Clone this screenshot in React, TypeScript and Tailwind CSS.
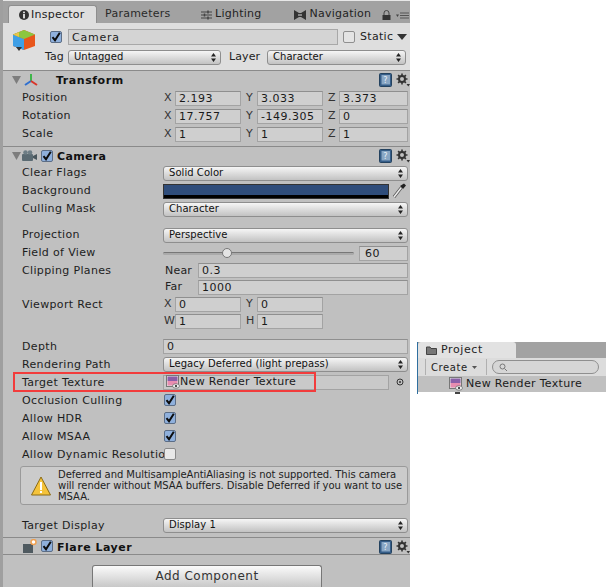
import type { ReactNode } from "react";

function Chevrons() {
  return (
    <svg width="5" height="9" viewBox="0 0 5 9" className="shrink-0">
      <path d="M2.5 0L5 3.5H0z M2.5 9L0 5.5h5z" fill="#222" />
    </svg>
  );
}

function Select({ value }: { value: string }) {
  return (
    <div className="flex h-[15px] flex-1 min-w-0 items-center justify-between rounded-[3px] border border-[#8e8e8e] bg-linear-to-b from-[#f6f6f6] to-[#c2c2c2] pl-[5px] pr-[4px] text-[10px] tracking-[0.05px] text-[#111]">
      <span className="-mt-[2px] whitespace-nowrap">{value}</span>
      <Chevrons />
    </div>
  );
}

function Field({ value, className = "flex-1" }: { value?: string; className?: string }) {
  return (
    <div className={`h-[15px] min-w-0 border border-[#a3a3a3] border-t-[#8f8f8f] bg-[#cfcfcf] pl-[3px] text-[11px] leading-[13px] tracking-[0.5px] text-[#1a1a1a] whitespace-nowrap ${className}`}>
      {value}
    </div>
  );
}

function Row({ label, children, low, className = "h-[18px]" }: { label: string; children?: ReactNode; low?: boolean; className?: string }) {
  return (
    <div className={`flex items-center pl-[19px] pr-[2px] ${className}`}>
      <span className={`w-[141px] shrink-0 text-[11px] tracking-[0.35px] text-[#1d1d1d] whitespace-nowrap ${low ? "pt-[2px]" : ""}`}>{label}</span>
      <div className="flex items-center flex-1 min-w-0">{children}</div>
    </div>
  );
}

function Cell({ axis, value, last }: { axis: string; value: string; last?: boolean }) {
  return (
    <div className={`flex items-center ${last ? "w-[81px]" : "w-[82px]"}`}>
      <span className="w-[12px] shrink-0 pl-[1px] text-[11px] text-[#333]">{axis}</span>
      <Field value={value} className={last ? "flex-1" : "flex-1 mr-[4px]"} />
    </div>
  );
}

function Vector({ label, x, y, z }: { label: string; x: string; y: string; z: string }) {
  return (
    <Row label={label}>
      <Cell axis="X" value={x} />
      <Cell axis="Y" value={y} />
      <Cell axis="Z" value={z} last />
    </Row>
  );
}

function Check({ on = true }: { on?: boolean }) {
  return (
    <div className={`relative size-[12px] shrink-0 rounded-[2px] border ${on ? "border-[#5b6d86] bg-[#8fb0dc]" : "border-[#8a8a8a] bg-[#e8e8e8]"}`}>
      {on && (
        <svg viewBox="0 0 12 12" className="absolute -left-px -top-px size-[12px]">
          <path d="M2.5 6.2L5 9.2L9.8 1.8" fill="none" stroke="#0d0d0d" strokeWidth="2" />
        </svg>
      )}
    </div>
  );
}

function HelpBook() {
  return (
    <svg width="13" height="14" viewBox="0 0 13 14">
      <rect x="0.5" y="0.5" width="12" height="13" rx="1" fill="#355d88" stroke="#24425f" />
      <rect x="2.5" y="2" width="8.5" height="9.5" fill="#88a6c4" />
      <text x="4.2" y="10" fontSize="8" fontFamily="'DejaVu Sans', sans-serif" fill="#e8f0f8">?</text>
    </svg>
  );
}

function Gear() {
  return (
    <svg width="14" height="14" viewBox="0 0 14 14">
      <circle cx="6" cy="6" r="3" fill="none" stroke="#333" strokeWidth="2" />
      <path d="M6 .5v2.4M6 9.1v2.4M.5 6h2.4M9.1 6h2.4M2.1 2.1l1.7 1.7M8.2 8.2l1.7 1.7M9.9 2.1L8.2 3.8M3.8 8.2L2.1 9.9" stroke="#333" strokeWidth="1.6" />
      <path d="M10.5 11h3.5l-1.7 2.5z" fill="#333" />
    </svg>
  );
}

function CompIcons() {
  return (
    <div className="ml-auto flex items-center gap-[4px]">
      <HelpBook />
      <Gear />
    </div>
  );
}

function Foldout() {
  return (
    <svg width="9" height="8" viewBox="0 0 9 8" className="shrink-0">
      <path d="M0 0h9L4.5 8z" fill="#7d7d7d" />
    </svg>
  );
}

function RenderTexIcon() {
  return (
    <svg width="14" height="14" viewBox="0 0 14 14" className="shrink-0">
      <rect x="0.5" y="0.5" width="12" height="11" fill="#e4e4e4" stroke="#777" />
      <rect x="1.5" y="1.5" width="10" height="4.5" fill="#8a5fa8" />
      <rect x="1.5" y="6" width="10" height="4.5" fill="#e88db0" />
      <ellipse cx="10" cy="11" rx="3.5" ry="2.2" fill="#f4f4f4" stroke="#444" strokeWidth="0.6" />
      <circle cx="10" cy="11" r="1.1" fill="#222" />
    </svg>
  );
}

export default function App() {
  return (
    <div className="flex h-[587px] w-[609px] overflow-hidden bg-white font-['DejaVu_Sans',sans-serif]">
      {/* Inspector */}
      <div className="flex h-full w-[410px] shrink-0 flex-col border-l-[3px] border-[#9f9f9f] bg-[#c0c0c0]">
        {/* Tabs */}
        <div className="flex h-[23px] shrink-0 items-end border-t border-[#e8e8e8] bg-[#a2a2a2] text-[11px] tracking-[0.25px] text-[#222]">
          <div className="ml-[5px] flex h-[18px] w-[89px] items-center gap-[2px] rounded-t-[3px] border border-b-0 border-[#8e8e8e] bg-[#dedede] pl-[10px] pt-[1px]">
            <svg width="10" height="10" viewBox="0 0 10 10">
              <circle cx="5" cy="5" r="5" fill="#333" />
              <rect x="4.2" y="1.6" width="1.6" height="1.6" fill="#fff" />
              <rect x="4.2" y="4" width="1.6" height="4.4" fill="#fff" />
            </svg>
            <span>Inspector</span>
          </div>
          <div className="flex h-[18px] w-[73px] items-center pl-[8px] pt-[1px] text-[#2a2a2a]">Parameters</div>
          <div className="ml-[31px] flex h-[18px] items-center gap-[3px] pt-[1px]">
            <svg width="11" height="10" viewBox="0 0 11 10">
              <path d="M0 2h11M0 5h11M0 8h11" stroke="#444" />
              <path d="M7 .5v3M3.5 3.5v3M7 6.5v3" stroke="#444" strokeWidth="1.5" />
            </svg>
            <span>Lighting</span>
          </div>
          <div className="ml-[33px] flex h-[18px] items-center gap-[3px] pt-[1px]">
            <svg width="12" height="10" viewBox="0 0 12 10">
              <path d="M0 0l5 3 2 0 5-3v10l-5-3H5l-5 3z" fill="#333" />
              <path d="M4 5h4" stroke="#ddd" />
            </svg>
            <span>Navigation</span>
          </div>
          <div className="ml-auto flex h-[18px] items-center gap-[5px] pr-[1px] pt-[2px]">
            <svg width="9" height="10" viewBox="0 0 9 10">
              <path d="M2 5V3a2.5 2.5 0 0 1 5 0v2" fill="none" stroke="#444" />
              <rect x="0.5" y="5" width="8" height="5" fill="#333" />
            </svg>
            <svg width="13" height="7" viewBox="0 0 13 7">
              <path d="M0 2.5h3L1.5 5z" fill="#444" />
              <path d="M4 1h9M4 3.5h9M4 6h9" stroke="#555" />
            </svg>
          </div>
        </div>

        {/* Object header */}
        <div className="flex h-[48px] shrink-0 border-b border-[#8a8a8a] bg-[#dedede]">
          <div className="w-[43px] shrink-0 pl-[10px] pt-[6px]">
            <svg width="22" height="24" viewBox="1 0 22 24">
              <path d="M12 1L23 5.5V17L12 21L1 17V5.5z" fill="#e8561c" />
              <path d="M1 5.5L12 10V21L1 17z" fill="#3f9fe6" />
              <path d="M12 1L23 5.5L12 10L1 5.5z" fill="#8cc63f" />
              <path d="M1 5.5L7 8V3.3z" fill="#e9c54a" />
              <path d="M4 18h6l-3 4z" fill="#333" />
            </svg>
          </div>
          <div className="flex flex-1 flex-col">
            <div className="mt-[6px] flex h-[16px] items-center">
              <div className="ml-[4px]"><Check /></div>
              <div className="ml-[6px] h-[16px] w-[270px] border border-[#a8a8a8] bg-[#d4d4d4] pl-[3px] text-[11px] leading-[15px] tracking-[0.75px] text-[#1d1d1d]">Camera</div>
              <div className="ml-[5px] size-[12px] rounded-[2px] border border-[#8f8f8f] bg-[#e4e4e4]" />
              <span className="ml-[5px] text-[11px] tracking-[0.3px] text-[#222]">Static</span>
              <svg width="10" height="6" viewBox="0 0 10 6" className="ml-[4px]">
                <path d="M0 0h10L5 6z" fill="#333" />
              </svg>
            </div>
            <div className="mt-[4px] flex h-[16px] items-center pr-[4px]">
              <span className="-ml-[1px] w-[23px] text-[11px] tracking-[0.1px] text-[#222]">Tag</span>
              <div className="flex w-[153px]"><Select value="Untagged" /></div>
              <span className="ml-[8px] w-[38px] text-[11px] tracking-[0.1px] text-[#222]">Layer</span>
              <div className="flex flex-1"><Select value="Character" /></div>
            </div>
          </div>
        </div>

        {/* Transform */}
        <div className="flex h-[18px] shrink-0 items-center pl-[9px]">
          <Foldout />
          <svg width="16" height="14" viewBox="0 0 16 14" className="ml-[2px]">
            <path d="M8 1v7" stroke="#3fb54a" strokeWidth="2" />
            <path d="M8 8l-6 4" stroke="#2f6fd0" strokeWidth="2" />
            <path d="M8 8l6 4" stroke="#d9352a" strokeWidth="2" />
          </svg>
          <span className="ml-[17px] mt-[3px] text-[11px] font-bold tracking-[0.55px] text-[#111]">Transform</span>
          <CompIcons />
        </div>
        <Vector label="Position" x="2.193" y="3.033" z="3.373" />
        <Vector label="Rotation" x="17.757" y="-149.305" z="0" />
        <Vector label="Scale" x="1" y="1" z="1" />
        <div className="mt-[3px] h-[1px] shrink-0 bg-[#8a8a8a]" />

        {/* Camera */}
        <div className="flex h-[17px] shrink-0 items-center pl-[9px]">
          <Foldout />
          <svg width="15" height="12" viewBox="0 0 15 12" className="ml-[1px]">
            <rect x="0" y="4" width="11" height="7" rx="1" fill="#5a6a72" />
            <circle cx="3.5" cy="2.5" r="2.3" fill="#6d7d85" />
            <circle cx="8" cy="2.5" r="2.3" fill="#6d7d85" />
            <path d="M11 6l4-2v6l-4-2z" fill="#48565c" />
          </svg>
          <div className="ml-[4px]"><Check /></div>
          <span className="ml-[4px] mt-[3px] text-[11px] font-bold tracking-[0.35px] text-[#111]">Camera</span>
          <CompIcons />
        </div>
        <Row label="Clear Flags"><Select value="Solid Color" /></Row>
        <Row label="Background">
          <div className="flex h-[15px] flex-1 flex-col border border-[#333]">
            <div className="flex-1 bg-[#2f4d7b]" />
            <div className="h-[3px] bg-black" />
          </div>
          <svg width="18" height="16" viewBox="0 0 18 16" className="ml-[1px] shrink-0">
            <path d="M4 14L11 5" stroke="#555" strokeWidth="3" />
            <path d="M4 14L11 5" stroke="#eee" strokeWidth="1.5" />
            <path d="M10 3L13 6L16 2.5L14 .5z" fill="#222" />
          </svg>
        </Row>
        <Row label="Culling Mask"><Select value="Character" /></Row>
        <div className="h-[8px] shrink-0" />
        <Row label="Projection"><Select value="Perspective" /></Row>
        <Row label="Field of View">
          <div className="relative flex h-[15px] w-[191px] items-center">
            <div className="h-[3px] w-full rounded-full border-t border-[#777] bg-[#aaa]" />
            <div className="absolute left-[59px] size-[10px] rounded-full border border-[#777] bg-[#e4e4e4]" />
          </div>
          <Field value="60" className="ml-[5px] flex-1 pl-[5px]" />
        </Row>
        <Row label="Clipping Planes" low className="h-[17px]">
          <span className="w-[35px] shrink-0 pl-[2px] pt-[1px] text-[11px] tracking-[0.2px] text-[#222]">Near</span>
          <Field value="0.3" />
        </Row>
        <Row label="" className="h-[16px]">
          <span className="w-[35px] shrink-0 pl-[2px] text-[11px] tracking-[0.2px] text-[#222]">Far</span>
          <Field value="1000" />
        </Row>
        <Row label="Viewport Rect" low>
          <Cell axis="X" value="0" />
          <Cell axis="Y" value="0" />
        </Row>
        <Row label="" className="h-[16px]">
          <Cell axis="W" value="1" />
          <Cell axis="H" value="1" />
        </Row>
        <div className="h-[8px] shrink-0" />
        <Row label="Depth" low><Field value="0" /></Row>
        <Row label="Rendering Path" low><Select value="Legacy Deferred (light prepass)" /></Row>

        {/* Target texture with red annotation */}
        <div className="relative">
          <Row label="Target Texture" low>
            <div className="flex h-[15px] w-[226px] items-center border border-[#a3a3a3] bg-[#c9c9c9] pl-[2px] text-[11px] tracking-[0.32px] text-[#1a1a1a]">
              <RenderTexIcon />
              <span className="whitespace-nowrap">New Render Texture</span>
            </div>
            <svg width="8" height="8" viewBox="0 0 8 8" className="ml-[7px]">
              <circle cx="4" cy="4" r="3" fill="none" stroke="#333" />
              <circle cx="4" cy="4" r="1" fill="#333" />
            </svg>
          </Row>
          <div className="absolute left-[10px] top-[-1px] h-[20px] w-[303px] border-2 border-[#f23c3c]" />
        </div>

        <Row label="Occlusion Culling" low><div className="ml-[1px]"><Check /></div></Row>
        <Row label="Allow HDR" low><div className="ml-[1px]"><Check /></div></Row>
        <Row label="Allow MSAA" low><div className="ml-[1px]"><Check /></div></Row>
        <Row label="Allow Dynamic Resolutio" low><div className="ml-[1px]"><Check on={false} /></div></Row>

        <div className="ml-[17px] mr-[2px] mt-[3px] flex h-[39px] shrink-0 items-center rounded-[3px] border border-[#9a9a9a] bg-[#cbcbcb] pl-[10px]">
          <svg width="20" height="20" viewBox="0 0 20 20" className="shrink-0">
            <path d="M10 1L19.5 19H.5z" fill="#f5c33b" stroke="#8a6a14" />
            <path d="M10 6v8" stroke="#fff" strokeWidth="2" />
            <rect x="9" y="15" width="2" height="2" fill="#fff" />
          </svg>
          <p className="ml-[7px] w-[346px] text-[10px] leading-[11px] tracking-[-0.05px] text-[#222]">
            Deferred and MultisampleAntiAliasing is not supported. This camera will render without MSAA buffers. Disable Deferred if you want to use MSAA.
          </p>
        </div>

        <div className="h-[11px] shrink-0" />
        <Row label="Target Display" low><Select value="Display 1" /></Row>
        <div className="mt-[3px] h-[1px] shrink-0 bg-[#8a8a8a]" />

        {/* Flare layer */}
        <div className="flex h-[16px] shrink-0 items-center pl-[20px]">
          <svg width="14" height="14" viewBox="0 0 14 14" className="shrink-0">
            <rect x="0" y="5" width="10" height="9" fill="#4f5a60" />
            <circle cx="10.5" cy="3" r="2.5" fill="#fff" stroke="#f0a050" strokeWidth="1.5" />
          </svg>
          <div className="ml-[4px]"><Check /></div>
          <span className="ml-[4px] mt-[5px] text-[11px] font-bold tracking-[0.5px] text-[#111]">Flare Layer</span>
          <div className="ml-auto flex items-center gap-[4px] pt-[2px]">
            <HelpBook />
            <Gear />
          </div>
        </div>
        <div className="h-[1px] shrink-0 bg-[#8a8a8a]" />

        <div className="flex flex-1 items-end pl-[89px]">
          <div className="flex h-[22px] w-[230px] items-center justify-center rounded-t-[3px] border border-b-0 border-[#777] bg-linear-to-b from-[#fbfbfb] to-[#c8c8c8] pb-[2px] text-[12px] tracking-[0.5px] text-[#333]">
            Add Component
          </div>
        </div>
      </div>

      {/* Project panel inset */}
      <div className="flex-1 pl-[7px] pt-[342px]">
        <div className="w-[189px] border-l border-[#2f6f9f]">
          <div className="h-[16px] bg-[#a2a2a2]">
            <div className="flex h-[16px] w-[98px] items-center gap-[4px] rounded-t-[3px] bg-[#e2e2e2] pl-[8px] pt-[1px] text-[11px] tracking-[0.6px] text-[#222]">
              <svg width="11" height="9" viewBox="0 0 11 9">
                <path d="M.5 8.5V1h3.5l1 1.5h5.5v6z" fill="#777" stroke="#444" />
              </svg>
              <span>Project</span>
            </div>
          </div>
          <div className="flex h-[18px] items-center bg-[#dcdcdc] pl-[7px]">
            <div className="flex h-[16px] w-[62px] items-center gap-[4px] border-r border-[#b0b0b0] border-l pl-[5px] text-[10px] tracking-[0.6px] text-[#222]">
              <span>Create</span>
              <svg width="5" height="3" viewBox="0 0 5 3"><path d="M0 0h5L2.5 3z" fill="#555" /></svg>
            </div>
            <div className="ml-[5px] flex h-[14px] w-[107px] items-center rounded-full border border-[#8f8f8f] bg-[#d6d6d6] pl-[6px]">
              <svg width="9" height="9" viewBox="0 0 9 9">
                <circle cx="3.5" cy="3.5" r="2.5" fill="none" stroke="#777" />
                <path d="M5.5 5.5L8 8" stroke="#777" />
              </svg>
            </div>
          </div>
          <div className="flex h-[16px] items-center overflow-hidden bg-[#c0c0c0] pl-[31px] text-[11px] tracking-[0.32px] text-[#1a1a1a]">
            <RenderTexIcon />
            <span className="ml-[3px] whitespace-nowrap">New Render Texture</span>
          </div>
          <div className="ml-[37px] h-[2px] w-[5px] bg-[#444]" />
        </div>
      </div>
    </div>
  );
}
